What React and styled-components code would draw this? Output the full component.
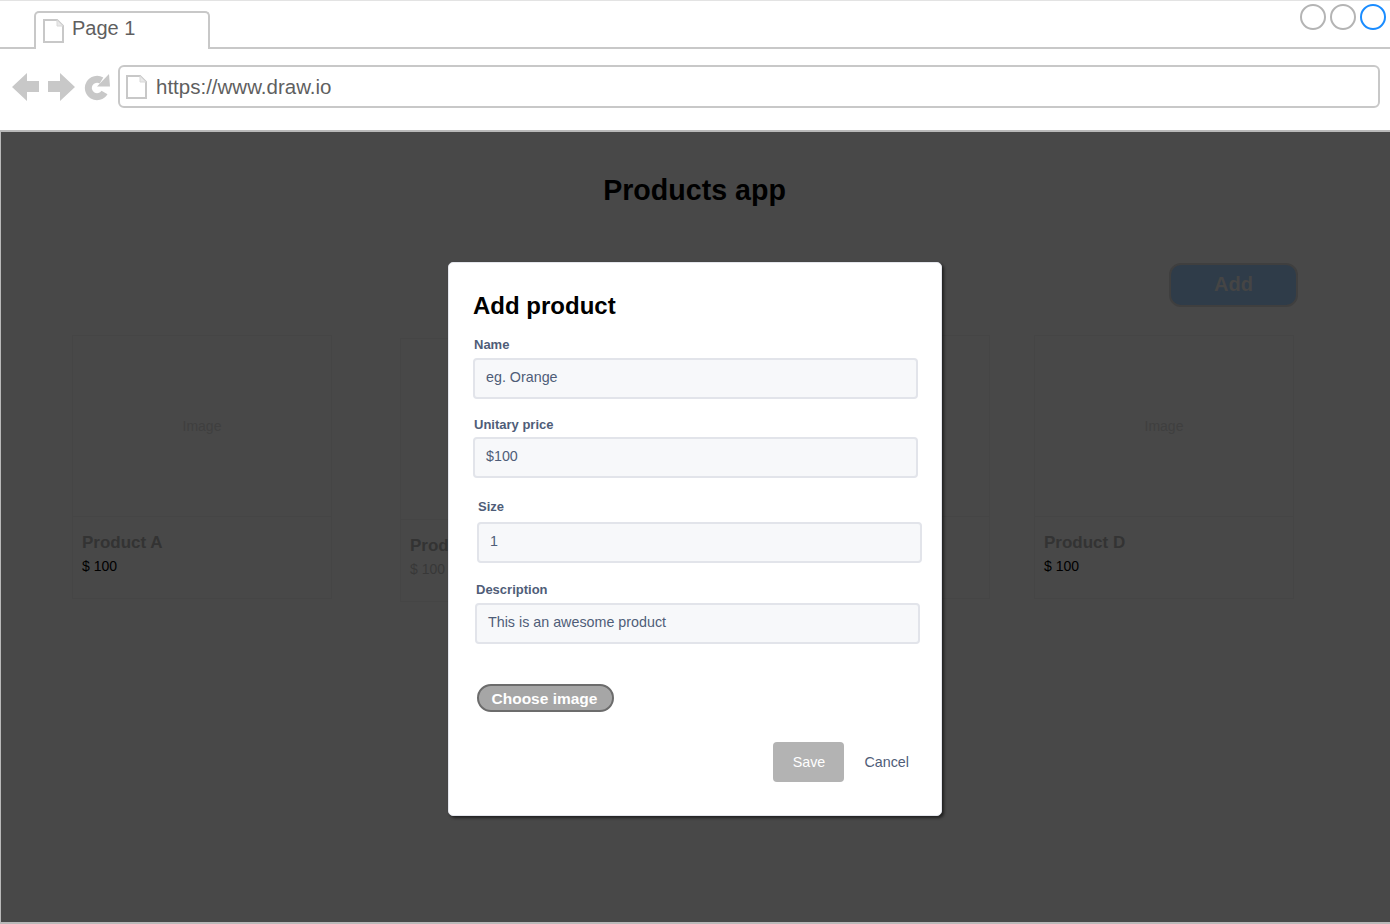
import React from "react";
import styled, { createGlobalStyle } from "styled-components";

const products = [
  { id: "a", name: "Product A", left: 71, top: 0, priceDark: false },
  { id: "b", name: "Product B", left: 68, top: 3, priceDark: true },
  { id: "c", name: "Product C", left: 70, top: 0, priceDark: false },
  { id: "d", name: "Product D", left: 44, top: 0, priceDark: false },
];

const PageIcon = () => (
  <svg width="21" height="24" viewBox="0 0 21 24" fill="none">
    <path d="M1 1H14L20 7V23H1Z" fill="#fff" stroke="#c8c8c8" strokeWidth="2" />
    <path d="M14 1V7H20" fill="#e8e8e8" stroke="#d8d8d8" strokeWidth="1" />
  </svg>
);

const App = () => (
  <Page>
    <GlobalStyle />
    <Chrome>
      <TabBar>
        <Tab>
          <PageIcon />
          <TabLabel>Page 1</TabLabel>
        </Tab>
        <WindowButtons>
          <WindowButton />
          <WindowButton />
          <WindowButton $active />
        </WindowButtons>
      </TabBar>
      <NavBar>
        <NavIcons>
          <svg width="27" height="28" viewBox="0 0 27 28">
            <path d="M0 14L15 0V8H27V19H15V28Z" fill="#c8c8c8" />
          </svg>
          <svg width="27" height="28" viewBox="0 0 27 28">
            <path d="M27 14L12 0V8H0V19H12V28Z" fill="#c8c8c8" />
          </svg>
          <svg width="26" height="28" viewBox="0 0 26 28">
            <path
              d="M20.5 19.5A8.7 8.7 0 1 1 17.5 7.5"
              fill="none"
              stroke="#c8c8c8"
              strokeWidth="7"
            />
            <path d="M25 1L26 13.5L13 13.5Z" fill="#c8c8c8" />
          </svg>
        </NavIcons>
        <AddressBar>
          <PageIcon />
          <AddressText>https://www.draw.io</AddressText>
        </AddressBar>
      </NavBar>
    </Chrome>

    <Stage>
      <AppTitle>Products app</AppTitle>
      <AddRow>
        <AddButton>Add</AddButton>
      </AddRow>
      <ProductRow>
        {products.map((product) => (
          <ProductCard key={product.id} $left={product.left} $top={product.top}>
            <ProductImage>Image</ProductImage>
            <ProductInfo>
              <ProductName>{product.name}</ProductName>
              <ProductPrice $dark={product.priceDark}>$ 100</ProductPrice>
            </ProductInfo>
          </ProductCard>
        ))}
      </ProductRow>

      <Modal>
        <ModalTitle>Add product</ModalTitle>
        <Field $top={18} $left={0}>
          <FieldLabel>Name</FieldLabel>
          <FieldInput $gap={6}>eg. Orange</FieldInput>
        </Field>
        <Field $top={19} $left={0}>
          <FieldLabel>Unitary price</FieldLabel>
          <FieldInput $gap={5}>$100</FieldInput>
        </Field>
        <Field $top={22} $left={4}>
          <FieldLabel>Size</FieldLabel>
          <FieldInput $gap={8}>1</FieldInput>
        </Field>
        <Field $top={20} $left={2}>
          <FieldLabel>Description</FieldLabel>
          <FieldInput $gap={6}>This is an awesome product</FieldInput>
        </Field>
        <ChooseButton>Choose image</ChooseButton>
        <ModalActions>
          <SaveButton>Save</SaveButton>
          <CancelButton>Cancel</CancelButton>
        </ModalActions>
      </Modal>
    </Stage>
  </Page>
);

export default App;

// Styled Components

const GlobalStyle = createGlobalStyle`
  html, body {
    margin: 0;
    padding: 0;
    background: #fff;
  }

  * {
    box-sizing: border-box;
  }
`;

const Page = styled.div`
  width: 1390px;
  height: 924px;
  display: flex;
  flex-direction: column;
  overflow: hidden;
  font-family: "Liberation Sans", Arial, sans-serif;
`;

const Chrome = styled.header`
  height: 132px;
  flex: none;
  background: #fff;
  border-top: 1px solid #e3e3e3;
  border-bottom: 2px solid #b9b9b9;
`;

const TabBar = styled.div`
  height: 48px;
  display: flex;
  justify-content: space-between;
  align-items: flex-end;
  padding: 0 4px 0 34px;
  border-bottom: 2px solid #c8c8c8;
`;

const Tab = styled.div`
  width: 176px;
  height: 38px;
  margin-bottom: -2px;
  padding: 6px 0 0 7px;
  display: flex;
  align-items: flex-start;
  gap: 8px;
  background: #fff;
  border: 2px solid #c8c8c8;
  border-bottom: none;
  border-radius: 5px 5px 0 0;
`;

const TabLabel = styled.span`
  margin-top: -2px;
  font-size: 20px;
  line-height: 22px;
  color: #5f5f5f;
`;

const WindowButtons = styled.div`
  display: flex;
  gap: 4px;
  align-self: flex-start;
  margin-top: 3px;
`;

const WindowButton = styled.span`
  width: 26px;
  height: 26px;
  border-radius: 50%;
  border: 2px solid ${(props) => (props.$active ? "#1a8cff" : "#b4b4b4")};
`;

const NavBar = styled.div`
  height: 81px;
  display: flex;
  align-items: flex-start;
  padding: 16px 10px 0 12px;
  gap: 6px;
`;

const NavIcons = styled.div`
  width: 100px;
  height: 44px;
  display: flex;
  align-items: center;
  gap: 9px;
`;

const AddressBar = styled.div`
  flex: 1;
  height: 43px;
  padding: 0 0 0 6px;
  display: flex;
  align-items: center;
  gap: 9px;
  border: 2px solid #c8c8c8;
  border-radius: 6px;
`;

const AddressText = styled.span`
  font-size: 20.5px;
  color: #5f5f5f;
`;

const Stage = styled.main`
  position: relative;
  flex: 1;
  background: #484848;
  border-left: 1px solid #b9b9b9;
  border-bottom: 2px solid #b9b9b9;
`;

const AppTitle = styled.h1`
  margin: 0;
  padding: 41px 2px 0 0;
  text-align: center;
  font-size: 28.6px;
  line-height: 34px;
  font-weight: 700;
  color: #000;
`;

const AddRow = styled.div`
  display: flex;
  justify-content: flex-end;
  padding: 56px 92px 0 0;
`;

const AddButton = styled.div`
  width: 129px;
  height: 44px;
  padding-bottom: 2px;
  display: flex;
  align-items: center;
  justify-content: center;
  background: #2f3c49;
  border: 2px solid #3f3f3f;
  border-radius: 12px;
  font-size: 20px;
  font-weight: 700;
  color: #454545;
`;

const ProductRow = styled.div`
  display: flex;
  align-items: flex-start;
  margin-top: 28px;
`;

const ProductCard = styled.article`
  width: 260px;
  height: 264px;
  margin-left: ${(props) => props.$left}px;
  margin-top: ${(props) => props.$top}px;
  display: flex;
  flex-direction: column;
  border: 1px solid #454545;
`;

const ProductImage = styled.div`
  height: 180px;
  display: flex;
  align-items: center;
  justify-content: center;
  padding-bottom: 1px;
  font-size: 14px;
  color: #3f3f3f;
`;

const ProductInfo = styled.div`
  flex: 1;
  padding: 15px 9px 0;
  border-top: 1px solid #454545;
`;

const ProductName = styled.div`
  font-size: 17px;
  line-height: 22px;
  font-weight: 700;
  color: #333;
`;

const ProductPrice = styled.div`
  margin-top: 4px;
  font-size: 14px;
  line-height: 16px;
  color: ${(props) => (props.$dark ? "#383838" : "#000")};
`;

const Modal = styled.section`
  position: absolute;
  left: 447px;
  top: 130px;
  width: 494px;
  height: 554px;
  padding: 29px 24px 0;
  background: #fff;
  border: 1px solid #e4e6ec;
  border-radius: 5px;
  box-shadow: 2px 2px 3px rgba(0, 0, 0, 0.55);
`;

const ModalTitle = styled.h2`
  margin: 0;
  font-size: 24px;
  line-height: 28px;
  font-weight: 700;
  color: #000;
`;

const Field = styled.div`
  width: 445px;
  margin-top: ${(props) => props.$top}px;
  margin-left: ${(props) => props.$left}px;
`;

const FieldLabel = styled.div`
  padding-left: 1px;
  font-size: 13px;
  line-height: 14px;
  font-weight: 700;
  color: #4f5d78;
`;

const FieldInput = styled.div`
  height: 41px;
  margin-top: ${(props) => props.$gap}px;
  padding: 0 11px 3px;
  display: flex;
  align-items: center;
  background: #f7f8fa;
  border: 2px solid #e2e4ea;
  border-radius: 4px;
  font-size: 14.3px;
  color: #4f5d78;
`;

const ChooseButton = styled.div`
  width: 137px;
  height: 28px;
  margin: 40px 0 0 4px;
  padding: 2px 2px 0 0;
  display: flex;
  align-items: center;
  justify-content: center;
  background: #a6a6a6;
  border: 2px solid #6c6c6c;
  border-radius: 14px;
  font-size: 15.5px;
  font-weight: 700;
  color: #fff;
`;

const ModalActions = styled.div`
  display: flex;
  justify-content: flex-end;
  align-items: center;
  gap: 20px;
  margin-top: 30px;
  padding-right: 8px;
`;

const SaveButton = styled.div`
  width: 71px;
  height: 40px;
  display: flex;
  align-items: center;
  justify-content: center;
  background: #b3b3b3;
  border-radius: 4px;
  font-size: 14.3px;
  color: #fff;
`;

const CancelButton = styled.div`
  font-size: 14.3px;
  color: #4f5d78;
`;
